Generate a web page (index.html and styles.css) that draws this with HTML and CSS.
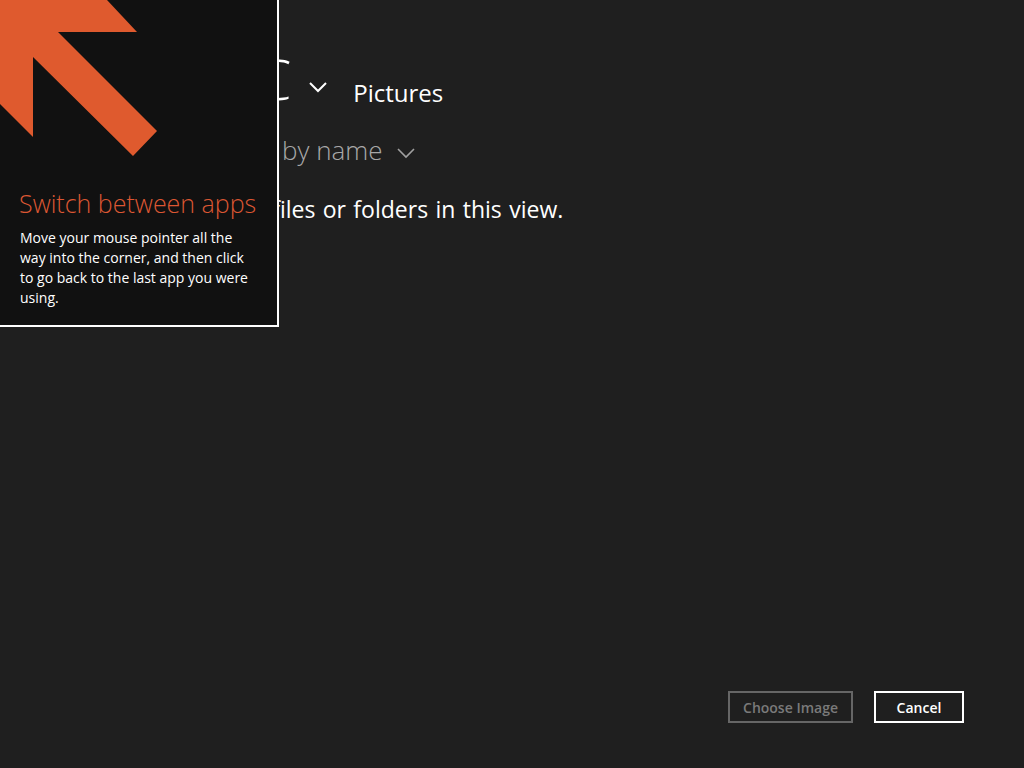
FILE: index.html
```html
<!DOCTYPE html>
<html lang="en">
<head>
<meta charset="utf-8">
<title>File picker</title>
<link rel="stylesheet" href="styles.css">
</head>
<body>
<div class="picker">
  <div class="header">
    <span class="title">This PC</span><svg class="chev-big" width="18" height="11" viewBox="0 0 18 11"><path d="M1 1 L9 9 L17 1" fill="none" stroke="#ffffff" stroke-width="2"/></svg><span class="folder">Pictures</span>
  </div>
  <div class="sort">
    <span>Sort by name</span><svg class="chev-sort" width="18" height="11" viewBox="0 0 18 11"><path d="M1 1 L9 9 L17 1" fill="none" stroke="#a0a0a0" stroke-width="1.6"/></svg>
  </div>
  <div class="empty">There are no files or folders in this view.</div>
  <div class="spacer"></div>
  <div class="footer">
    <button class="btn btn-disabled">Choose Image</button>
    <button class="btn btn-primary">Cancel</button>
  </div>
</div>
<div class="tip">
  <svg class="tip-arrow" width="160" height="160" viewBox="0 0 160 160"><polygon points="0,0 107,0 137,32 58,32 157,131 133,156 33,57 33,137 0,104" fill="#df5a2e"/></svg>
  <div class="tip-title">Switch between apps</div>
  <p class="tip-text">Move your mouse pointer all the way into the corner, and then click to go back to the last app you were using.</p>
</div>
</body>
</html>
```
FILE: styles.css
```css
html, body {
  margin: 0;
  padding: 0;
  background: #1f1f1f;
  color: #ffffff;
  font-family: "Open Sans", "Noto Sans", sans-serif;
}
body {
  width: 1024px;
  height: 768px;
  overflow: hidden;
  position: relative;
}
.picker {
  display: flex;
  flex-direction: column;
  height: 768px;
  box-sizing: border-box;
  padding: 40px 60px 45px 0;
}
.header {
  white-space: nowrap;
  padding-left: 114px;
  height: 76px;
  line-height: 76px;
}
.title {
  font-size: 56px;
  font-weight: 300;
  letter-spacing: -1px;
}
.chev-big {
  margin-left: 19px;
  vertical-align: 7px;
}
.folder {
  font-size: 24px;
  font-weight: 400;
  margin-left: 26px;
  vertical-align: -2px;
}
.sort {
  display: flex;
  align-items: center;
  padding-left: 227px;
  margin-top: 16px;
  font-size: 26px;
  font-weight: 300;
  color: #a8a8a8;
}
.chev-sort {
  margin-left: 14px;
  margin-top: 6px;
}
.empty {
  padding-left: 125px;
  margin-top: 25px;
  font-size: 23px;
  font-weight: 400;
  word-spacing: 1.4px;
}
.spacer { flex: 1; }
.footer {
  display: flex;
  justify-content: flex-end;
  gap: 21px;
}
.btn {
  height: 32px;
  box-sizing: border-box;
  background: transparent;
  font-family: "Open Sans", "Noto Sans", sans-serif;
  font-size: 14px;
  font-weight: 600;
  padding: 0 10px;
  margin: 0;
}
.btn-disabled {
  width: 125px;
  border: 2px solid #666666;
  color: #7a7a7a;
}
.btn-primary {
  width: 90px;
  border: 2px solid #ffffff;
  color: #ffffff;
}
.tip {
  position: absolute;
  top: 0;
  left: 0;
  width: 237px;
  height: 325px;
  background: #111111;
  border-right: 2px solid #ffffff;
  border-bottom: 2px solid #ffffff;
  padding: 0 20px;
}
.tip-arrow {
  display: block;
  margin-left: -20px;
}
.tip-title {
  margin-top: 26px;
  font-size: 25px;
  font-weight: 300;
  color: #dc5733;
  margin-left: -1px;
}
.tip-text {
  margin: 8px 0 0 0;
  font-size: 14px;
  line-height: 20px;
  color: #ffffff;
}
```
